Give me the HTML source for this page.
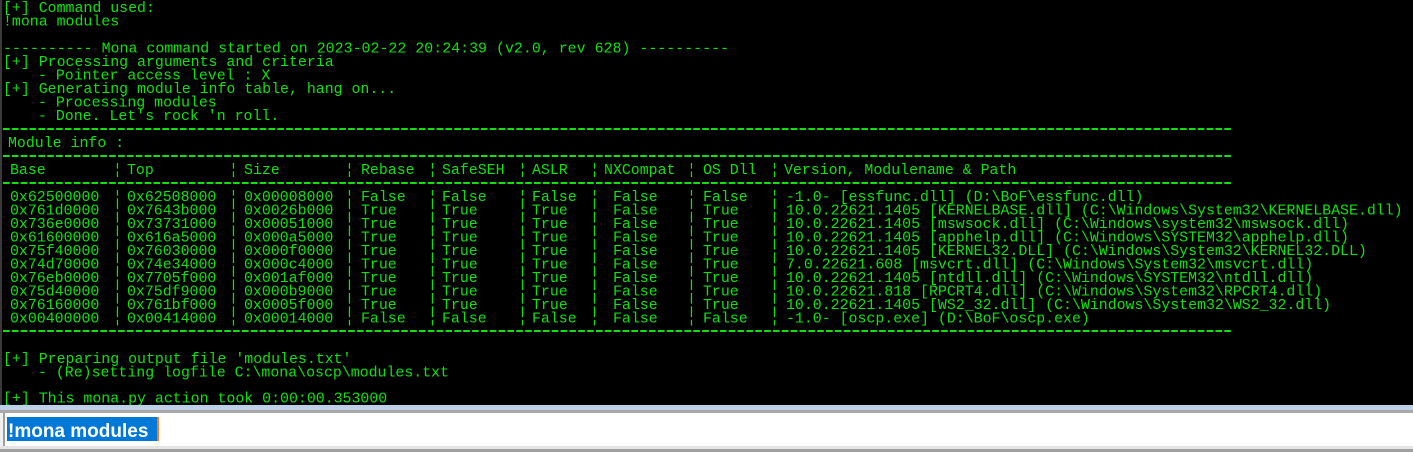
<!DOCTYPE html>
<html><head><meta charset="utf-8"><style>
html,body{margin:0;padding:0;width:1413px;height:452px;overflow:hidden;background:#000}
svg{display:block}
</style></head><body>
<svg width="1413" height="452" xmlns="http://www.w3.org/2000/svg">
<rect x="0" y="0" width="1413" height="405" fill="#000"/>
<rect x="0" y="0" width="2" height="405" fill="#3a3a3a"/>
<g font-family="Liberation Mono, monospace" font-size="14.9" fill="#10e010">
<text x="3" y="12">[+] Command used:</text>
<text x="3" y="25.5">!mona modules</text>
<text x="3" y="52.5" textLength="726">---------- Mona command started on 2023-02-22 20:24:39 (v2.0, rev 628) ----------</text>
<text x="3" y="66">[+] Processing arguments and criteria</text>
<text x="38" y="79.5">- Pointer access level : X</text>
<text x="3" y="93">[+] Generating module info table, hang on...</text>
<text x="38" y="106.5">- Processing modules</text>
<text x="38" y="120">- Done. Let's rock 'n roll.</text>
<text x="8" y="147">Module info :</text>
<text x="10" y="174">Base</text><text x="113" y="174">¦</text>
<text x="127" y="174">Top</text><text x="229" y="174">¦</text>
<text x="244" y="174">Size</text><text x="345" y="174">¦</text>
<text x="361" y="174">Rebase</text><text x="428" y="174">¦</text>
<text x="442" y="174">SafeSEH</text><text x="518" y="174">¦</text>
<text x="532" y="174">ASLR</text><text x="590" y="174">¦</text>
<text x="604" y="174">NXCompat</text><text x="687" y="174">¦</text>
<text x="703" y="174">OS Dll</text><text x="770" y="174">¦</text>
<text x="784" y="174">Version, Modulename &amp; Path</text>
</g>
<g stroke="#10e010" stroke-width="2" stroke-dasharray="6.6 2.25">
<line x1="3" y1="129" x2="1233" y2="129"/>
<line x1="3" y1="156" x2="1233" y2="156"/>
<line x1="3" y1="183" x2="1233" y2="183"/>
<line x1="3" y1="331" x2="1233" y2="331"/>
</g>
<g font-family="Liberation Mono, monospace" font-size="14.9" fill="#10e010">
<text y="201"><tspan x="10">0x62500000</tspan><tspan x="113">¦</tspan><tspan x="127">0x62508000</tspan><tspan x="229">¦</tspan><tspan x="244">0x00008000</tspan><tspan x="345">¦</tspan><tspan x="361">False</tspan><tspan x="428">¦</tspan><tspan x="442">False</tspan><tspan x="518">¦</tspan><tspan x="532">False</tspan><tspan x="590">¦</tspan><tspan x="613">False</tspan><tspan x="687">¦</tspan><tspan x="703">False</tspan><tspan x="770">¦</tspan><tspan x="786">-1.0- [essfunc.dll] (D:\BoF\essfunc.dll)</tspan></text>
<text y="214.5"><tspan x="10">0x761d0000</tspan><tspan x="113">¦</tspan><tspan x="127">0x7643b000</tspan><tspan x="229">¦</tspan><tspan x="244">0x0026b000</tspan><tspan x="345">¦</tspan><tspan x="361">True</tspan><tspan x="428">¦</tspan><tspan x="442">True</tspan><tspan x="518">¦</tspan><tspan x="532">True</tspan><tspan x="590">¦</tspan><tspan x="613">False</tspan><tspan x="687">¦</tspan><tspan x="703">True</tspan><tspan x="770">¦</tspan><tspan x="786">10.0.22621.1405 [KERNELBASE.dll] (C:\Windows\System32\KERNELBASE.dll)</tspan></text>
<text y="228"><tspan x="10">0x736e0000</tspan><tspan x="113">¦</tspan><tspan x="127">0x73731000</tspan><tspan x="229">¦</tspan><tspan x="244">0x00051000</tspan><tspan x="345">¦</tspan><tspan x="361">True</tspan><tspan x="428">¦</tspan><tspan x="442">True</tspan><tspan x="518">¦</tspan><tspan x="532">True</tspan><tspan x="590">¦</tspan><tspan x="613">False</tspan><tspan x="687">¦</tspan><tspan x="703">True</tspan><tspan x="770">¦</tspan><tspan x="786">10.0.22621.1405 [mswsock.dll] (C:\Windows\system32\mswsock.dll)</tspan></text>
<text y="241.5"><tspan x="10">0x61600000</tspan><tspan x="113">¦</tspan><tspan x="127">0x616a5000</tspan><tspan x="229">¦</tspan><tspan x="244">0x000a5000</tspan><tspan x="345">¦</tspan><tspan x="361">True</tspan><tspan x="428">¦</tspan><tspan x="442">True</tspan><tspan x="518">¦</tspan><tspan x="532">True</tspan><tspan x="590">¦</tspan><tspan x="613">False</tspan><tspan x="687">¦</tspan><tspan x="703">True</tspan><tspan x="770">¦</tspan><tspan x="786">10.0.22621.1405 [apphelp.dll] (C:\Windows\SYSTEM32\apphelp.dll)</tspan></text>
<text y="255"><tspan x="10">0x75f40000</tspan><tspan x="113">¦</tspan><tspan x="127">0x76030000</tspan><tspan x="229">¦</tspan><tspan x="244">0x000f0000</tspan><tspan x="345">¦</tspan><tspan x="361">True</tspan><tspan x="428">¦</tspan><tspan x="442">True</tspan><tspan x="518">¦</tspan><tspan x="532">True</tspan><tspan x="590">¦</tspan><tspan x="613">False</tspan><tspan x="687">¦</tspan><tspan x="703">True</tspan><tspan x="770">¦</tspan><tspan x="786">10.0.22621.1405 [KERNEL32.DLL] (C:\Windows\System32\KERNEL32.DLL)</tspan></text>
<text y="268.5"><tspan x="10">0x74d70000</tspan><tspan x="113">¦</tspan><tspan x="127">0x74e34000</tspan><tspan x="229">¦</tspan><tspan x="244">0x000c4000</tspan><tspan x="345">¦</tspan><tspan x="361">True</tspan><tspan x="428">¦</tspan><tspan x="442">True</tspan><tspan x="518">¦</tspan><tspan x="532">True</tspan><tspan x="590">¦</tspan><tspan x="613">False</tspan><tspan x="687">¦</tspan><tspan x="703">True</tspan><tspan x="770">¦</tspan><tspan x="786">7.0.22621.608 [msvcrt.dll] (C:\Windows\System32\msvcrt.dll)</tspan></text>
<text y="282"><tspan x="10">0x76eb0000</tspan><tspan x="113">¦</tspan><tspan x="127">0x7705f000</tspan><tspan x="229">¦</tspan><tspan x="244">0x001af000</tspan><tspan x="345">¦</tspan><tspan x="361">True</tspan><tspan x="428">¦</tspan><tspan x="442">True</tspan><tspan x="518">¦</tspan><tspan x="532">True</tspan><tspan x="590">¦</tspan><tspan x="613">False</tspan><tspan x="687">¦</tspan><tspan x="703">True</tspan><tspan x="770">¦</tspan><tspan x="786">10.0.22621.1405 [ntdll.dll] (C:\Windows\SYSTEM32\ntdll.dll)</tspan></text>
<text y="295.5"><tspan x="10">0x75d40000</tspan><tspan x="113">¦</tspan><tspan x="127">0x75df9000</tspan><tspan x="229">¦</tspan><tspan x="244">0x000b9000</tspan><tspan x="345">¦</tspan><tspan x="361">True</tspan><tspan x="428">¦</tspan><tspan x="442">True</tspan><tspan x="518">¦</tspan><tspan x="532">True</tspan><tspan x="590">¦</tspan><tspan x="613">False</tspan><tspan x="687">¦</tspan><tspan x="703">True</tspan><tspan x="770">¦</tspan><tspan x="786">10.0.22621.818 [RPCRT4.dll] (C:\Windows\System32\RPCRT4.dll)</tspan></text>
<text y="309"><tspan x="10">0x76160000</tspan><tspan x="113">¦</tspan><tspan x="127">0x761bf000</tspan><tspan x="229">¦</tspan><tspan x="244">0x0005f000</tspan><tspan x="345">¦</tspan><tspan x="361">True</tspan><tspan x="428">¦</tspan><tspan x="442">True</tspan><tspan x="518">¦</tspan><tspan x="532">True</tspan><tspan x="590">¦</tspan><tspan x="613">False</tspan><tspan x="687">¦</tspan><tspan x="703">True</tspan><tspan x="770">¦</tspan><tspan x="786">10.0.22621.1405 [WS2_32.dll] (C:\Windows\System32\WS2_32.dll)</tspan></text>
<text y="322.5"><tspan x="10">0x00400000</tspan><tspan x="113">¦</tspan><tspan x="127">0x00414000</tspan><tspan x="229">¦</tspan><tspan x="244">0x00014000</tspan><tspan x="345">¦</tspan><tspan x="361">False</tspan><tspan x="428">¦</tspan><tspan x="442">False</tspan><tspan x="518">¦</tspan><tspan x="532">False</tspan><tspan x="590">¦</tspan><tspan x="613">False</tspan><tspan x="687">¦</tspan><tspan x="703">False</tspan><tspan x="770">¦</tspan><tspan x="786">-1.0- [oscp.exe] (D:\BoF\oscp.exe)</tspan></text>
<text x="3" y="363">[+] Preparing output file 'modules.txt'</text>
<text x="38" y="376.5">- (Re)setting logfile C:\mona\oscp\modules.txt</text>
<text x="3" y="402.5">[+] This mona.py action took 0:00:00.353000</text>
</g>
<rect x="0" y="405" width="1413" height="47" fill="#f0f0f0"/>
<rect x="0" y="405" width="1413" height="5" fill="#bcd0e8"/>
<rect x="0" y="410" width="1413" height="3" fill="#a8a8a8"/>
<rect x="3" y="413" width="1410" height="33" fill="#fff"/>
<rect x="3" y="413" width="2" height="33" fill="#a0a0a0"/>
<rect x="0" y="446" width="1413" height="3" fill="#e4e4e4"/>
<rect x="0" y="449" width="1413" height="3" fill="#a0a0a0"/>
<rect x="7" y="417" width="150" height="24" fill="#0078d7"/>
<rect x="157" y="417" width="2" height="24" fill="#f08020"/>
<text x="8" y="437" font-family="Liberation Sans, sans-serif" font-weight="bold" font-size="19" fill="#fff">!mona modules</text>
</svg>
</body></html>
